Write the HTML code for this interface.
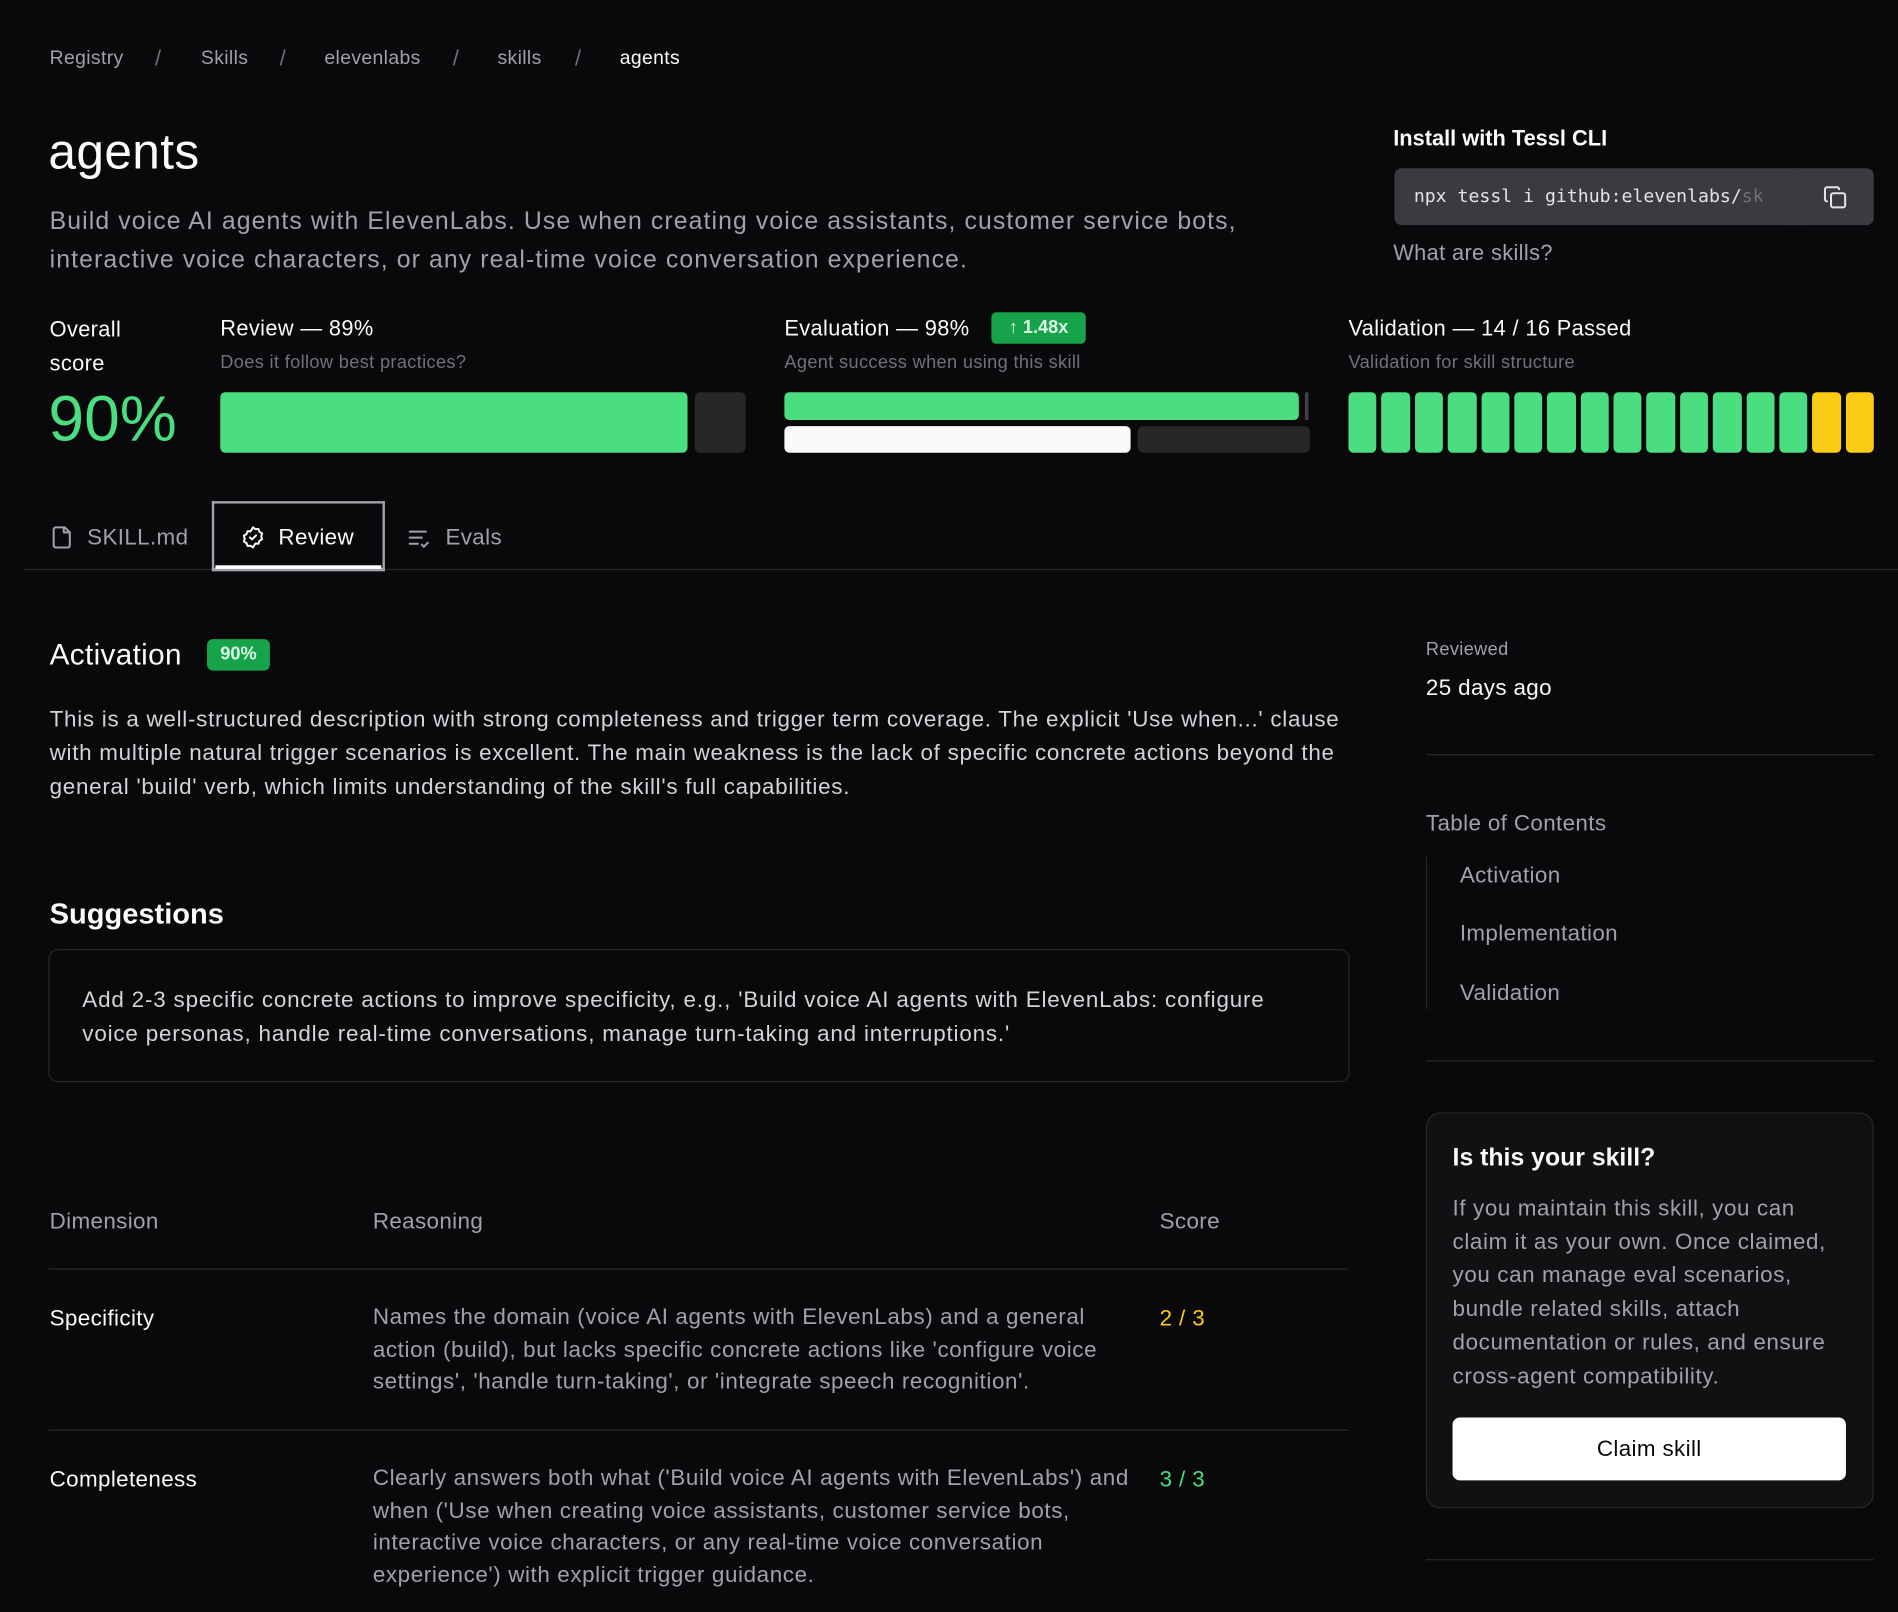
<!DOCTYPE html>
<html><head><meta charset="utf-8"><style>
html,body{margin:0;padding:0;background:#09090b;width:1898px;height:1612px;overflow:hidden}
#w{position:absolute;left:0;top:0;width:1568px;height:1332px;transform:scale(1.21046);transform-origin:0 0;font-family:"Liberation Sans",sans-serif;color:#fafafa;letter-spacing:0.3px}
.a{position:absolute;white-space:nowrap}
.g{color:#a1a1aa}
.m{color:#71717a}
.p{letter-spacing:0.6px}
.bar{position:absolute;border-radius:4px}
.ln{position:absolute;height:1px;background:#27272a}
</style></head><body><div id="w">
<div class="a g" style="left:41px;top:40px;font-size:16px">Registry</div>
<div class="a m" style="left:128px;top:38px;font-size:18px">/</div>
<div class="a g" style="left:166px;top:40px;font-size:16px">Skills</div>
<div class="a m" style="left:231px;top:38px;font-size:18px">/</div>
<div class="a g" style="left:268px;top:40px;font-size:16px">elevenlabs</div>
<div class="a m" style="left:374px;top:38px;font-size:18px">/</div>
<div class="a g" style="left:411px;top:40px;font-size:16px">skills</div>
<div class="a m" style="left:475px;top:38px;font-size:18px">/</div>
<div class="a" style="left:512px;top:40px;font-size:16px">agents</div>

<div class="a" style="left:40px;top:102px;font-size:41px">agents</div>
<div class="a g" style="left:41px;top:167px;font-size:20.5px;line-height:32px;letter-spacing:0.9px">Build voice AI agents with ElevenLabs. Use when creating voice assistants, customer service bots,<br>interactive voice characters, or any real-time voice conversation experience.</div>

<div class="a" style="left:1151px;top:104px;font-size:18px;font-weight:bold;letter-spacing:0">Install with Tessl CLI</div>
<div class="a" style="left:1152px;top:139px;width:396px;height:47px;background:#3a3a40;border-radius:6px;overflow:hidden">
<div class="a" style="left:16px;top:14px;font-family:'DejaVu Sans Mono','Liberation Mono',monospace;font-size:15px;color:#e4e4e7;letter-spacing:0">npx tessl i github:elevenlabs/<span style="color:#71717a">sk</span></div>
<div class="a" style="left:300px;top:0;width:40px;height:47px;background:linear-gradient(90deg,rgba(58,58,64,0),#3a3a40)"></div>
<svg class="a" style="left:354px;top:14px" width="20" height="20" viewBox="0 0 24 24" fill="none" stroke="#e4e4e7" stroke-width="2" stroke-linecap="round" stroke-linejoin="round"><rect x="8" y="8" width="14" height="14" rx="2"/><path d="M4 16c-1.1 0-2-.9-2-2V4c0-1.1.9-2 2-2h10c1.1 0 2 .9 2 2"/></svg>
</div>
<div class="a g" style="left:1151px;top:199px;font-size:18px">What are skills?</div>

<div class="a" style="left:41px;top:258px;font-size:18px;line-height:28px">Overall<br>score</div>
<div class="a" style="left:40px;top:316px;font-size:53px;color:#4ade80;letter-spacing:0">90%</div>

<div class="a" style="left:182px;top:261px;font-size:18px">Review — 89%</div>
<div class="a m" style="left:182px;top:291px;font-size:15px">Does it follow best practices?</div>
<div class="bar" style="left:182px;top:324px;width:386px;height:50px;background:#4ade80"></div>
<div class="bar" style="left:574px;top:324px;width:42px;height:50px;background:#27272a"></div>

<div class="a" style="left:648px;top:261px;font-size:18px">Evaluation — 98%</div>
<div class="a" style="left:819px;top:258px;width:78px;height:26px;background:#16a34a;border-radius:4px;font-size:15px;font-weight:bold;text-align:center;line-height:26px;color:#dcfce7;letter-spacing:0">↑ 1.48x</div>
<div class="a m" style="left:648px;top:291px;font-size:15px">Agent success when using this skill</div>
<div class="bar" style="left:648px;top:324px;width:425px;height:23px;background:#4ade80"></div>
<div class="bar" style="left:1078px;top:324px;width:3px;height:23px;background:#3f3f46;border-radius:1px"></div>
<div class="bar" style="left:648px;top:352px;width:286px;height:22px;background:#fafafa"></div>
<div class="bar" style="left:940px;top:352px;width:142px;height:22px;background:#27272a"></div>

<div class="a" style="left:1114px;top:261px;font-size:18px">Validation — 14 / 16 Passed</div>
<div class="a m" style="left:1114px;top:291px;font-size:15px">Validation for skill structure</div>
<div class="a" style="left:1114px;top:324px;width:434px;height:50px;display:flex;gap:4px">
<div style="flex:1;background:#4ade80;border-radius:4px"></div><div style="flex:1;background:#4ade80;border-radius:4px"></div><div style="flex:1;background:#4ade80;border-radius:4px"></div><div style="flex:1;background:#4ade80;border-radius:4px"></div><div style="flex:1;background:#4ade80;border-radius:4px"></div><div style="flex:1;background:#4ade80;border-radius:4px"></div><div style="flex:1;background:#4ade80;border-radius:4px"></div><div style="flex:1;background:#4ade80;border-radius:4px"></div><div style="flex:1;background:#4ade80;border-radius:4px"></div><div style="flex:1;background:#4ade80;border-radius:4px"></div><div style="flex:1;background:#4ade80;border-radius:4px"></div><div style="flex:1;background:#4ade80;border-radius:4px"></div><div style="flex:1;background:#4ade80;border-radius:4px"></div><div style="flex:1;background:#4ade80;border-radius:4px"></div><div style="flex:1;background:#facc15;border-radius:4px"></div><div style="flex:1;background:#facc15;border-radius:4px"></div>
</div>

<!-- tabs -->
<div class="ln" style="left:20px;top:470px;width:1548px"></div>
<svg class="a" style="left:41px;top:434px" width="20" height="20" viewBox="0 0 24 24" fill="none" stroke="#a1a1aa" stroke-width="2" stroke-linejoin="round"><path d="M15 2H6a2 2 0 0 0-2 2v16a2 2 0 0 0 2 2h12a2 2 0 0 0 2-2V7z"/><path d="M14 2v5h6"/></svg>
<div class="a g" style="left:72px;top:433px;font-size:18.5px">SKILL.md</div>
<div class="a" style="left:175px;top:414px;width:139px;height:55px;border:2px solid #a1a1aa;border-bottom:none"></div>
<div class="a" style="left:175px;top:469px;width:143px;height:3px;background:#a1a1aa"></div>
<div class="a" style="left:178px;top:467px;width:137px;height:3px;background:#fff"></div>
<svg class="a" style="left:199px;top:434px" width="20" height="20" viewBox="0 0 24 24" fill="none" stroke="#fafafa" stroke-width="2" stroke-linecap="round" stroke-linejoin="round"><path d="M12 2l2.4 1.8 3-.2 1 2.8 2.6 1.6-.8 2.9.8 2.9-2.6 1.6-1 2.8-3-.2L12 22l-2.4-1.8-3 .2-1-2.8-2.6-1.6.8-2.9-.8-2.9 2.6-1.6 1-2.8 3 .2z"/><path d="M9 12l2 2 4-4"/></svg>
<div class="a" style="left:230px;top:433px;font-size:18.5px">Review</div>
<svg class="a" style="left:336px;top:435px" width="20" height="20" viewBox="0 0 24 24" fill="none" stroke="#a1a1aa" stroke-width="2" stroke-linecap="round"><path d="M3 5h16M3 11h12M3 17h8M15 18l2 2 4-4"/></svg>
<div class="a g" style="left:368px;top:433px;font-size:18.5px">Evals</div>

<!-- main -->
<div class="a" style="left:41px;top:528px;font-size:24.5px">Activation</div>
<div class="a" style="left:171px;top:528px;width:52px;height:26px;background:#16a34a;border-radius:5px;font-size:15px;font-weight:bold;text-align:center;line-height:26px;color:#dcfce7;letter-spacing:0">90%</div>
<div class="a p" style="left:41px;top:580px;font-size:18.5px;line-height:28px;color:#d4d4d8">This is a well-structured description with strong completeness and trigger term coverage. The explicit 'Use when...' clause<br>with multiple natural trigger scenarios is excellent. The main weakness is the lack of specific concrete actions beyond the<br>general 'build' verb, which limits understanding of the skill's full capabilities.</div>

<div class="a" style="left:41px;top:742px;font-size:24px;font-weight:bold;letter-spacing:0">Suggestions</div>
<div class="a" style="left:40px;top:784px;width:1073px;height:108px;border:1px solid #27272a;border-radius:8px"></div>
<div class="a" style="left:68px;top:812px;font-size:18.5px;line-height:27.5px;color:#d4d4d8;letter-spacing:0.68px">Add 2-3 specific concrete actions to improve specificity, e.g., 'Build voice AI agents with ElevenLabs: configure<br>voice personas, handle real-time conversations, manage turn-taking and interruptions.'</div>

<div class="a g" style="left:41px;top:998px;font-size:18.5px">Dimension</div>
<div class="a g" style="left:308px;top:998px;font-size:18.5px">Reasoning</div>
<div class="a g" style="left:958px;top:998px;font-size:18.5px">Score</div>
<div class="ln" style="left:40px;top:1048px;width:1074px"></div>
<div class="a" style="left:41px;top:1078px;font-size:18.5px">Specificity</div>
<div class="a g" style="left:308px;top:1075px;font-size:18.5px;line-height:26.5px;letter-spacing:0.5px">Names the domain (voice AI agents with ElevenLabs) and a general<br>action (build), but lacks specific concrete actions like 'configure voice<br>settings', 'handle turn-taking', or 'integrate speech recognition'.</div>
<div class="a" style="left:958px;top:1078px;font-size:18.5px;color:#facc15">2 / 3</div>
<div class="ln" style="left:40px;top:1181px;width:1074px"></div>
<div class="a" style="left:41px;top:1211px;font-size:18.5px">Completeness</div>
<div class="a g" style="left:308px;top:1208px;font-size:18.5px;line-height:26.5px;letter-spacing:0.5px">Clearly answers both what ('Build voice AI agents with ElevenLabs') and<br>when ('Use when creating voice assistants, customer service bots,<br>interactive voice characters, or any real-time voice conversation<br>experience') with explicit trigger guidance.</div>
<div class="a" style="left:958px;top:1211px;font-size:18.5px;color:#4ade80">3 / 3</div>

<!-- sidebar -->
<div class="a g" style="left:1178px;top:528px;font-size:15px">Reviewed</div>
<div class="a" style="left:1178px;top:557px;font-size:18.5px">25 days ago</div>
<div class="ln" style="left:1178px;top:623px;width:370px"></div>
<div class="a g" style="left:1178px;top:669px;font-size:18.5px">Table of Contents</div>
<div class="a" style="left:1178px;top:708px;width:1px;height:126px;background:#27272a"></div>
<div class="a g" style="left:1206px;top:712px;font-size:18.5px">Activation</div>
<div class="a g" style="left:1206px;top:760px;font-size:18.5px">Implementation</div>
<div class="a g" style="left:1206px;top:809px;font-size:18.5px">Validation</div>
<div class="ln" style="left:1178px;top:876px;width:370px"></div>
<div class="a" style="left:1178px;top:919px;width:368px;height:325px;background:#111113;border:1px solid #27272a;border-radius:12px"></div>
<div class="a" style="left:1200px;top:945px;font-size:20.5px;font-weight:bold;letter-spacing:0">Is this your skill?</div>
<div class="a g" style="left:1200px;top:984px;font-size:18.5px;line-height:27.7px;letter-spacing:0.5px">If you maintain this skill, you can<br>claim it as your own. Once claimed,<br>you can manage eval scenarios,<br>bundle related skills, attach<br>documentation or rules, and ensure<br>cross-agent compatibility.</div>
<div class="a" style="left:1200px;top:1171px;width:325px;height:52px;background:#fff;border-radius:6px;color:#09090b;font-size:18.5px;text-align:center;line-height:52px">Claim skill</div>
<div class="ln" style="left:1178px;top:1288px;width:370px"></div>
</div></body></html>
